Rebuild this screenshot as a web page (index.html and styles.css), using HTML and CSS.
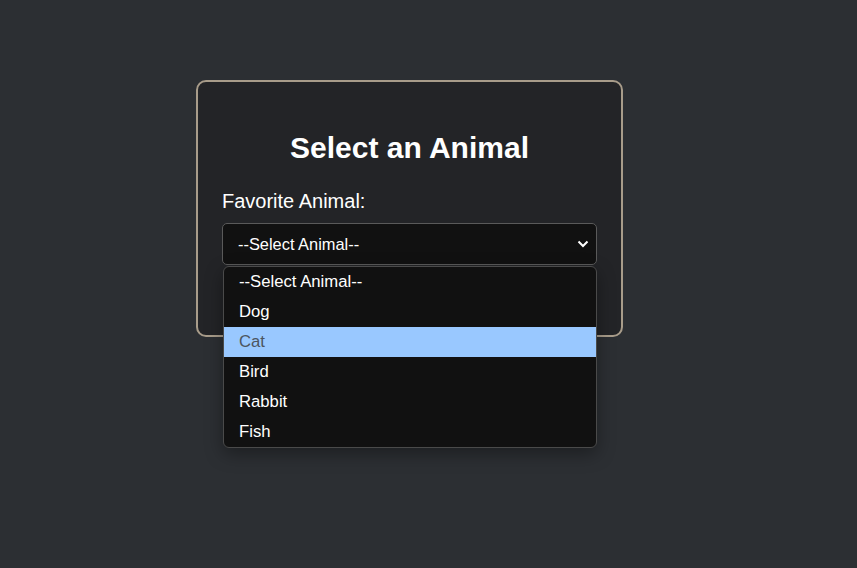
FILE: index.html
```html
<!DOCTYPE html>
<html lang="en">
<head>
<meta charset="utf-8">
<title>Select an Animal</title>
<link rel="stylesheet" href="styles.css">
</head>
<body>
<div class="stage">
  <div class="card">
    <h2 class="title">Select an Animal</h2>
    <label class="label" for="animal">Favorite Animal:</label>
    <div class="select" id="animal">
      <span>--Select Animal--</span>
      <svg class="chev" width="12" height="8" viewBox="0 0 12 8"><path d="M1.5 1.5 L6 6 L10.5 1.5" fill="none" stroke="#fff" stroke-width="2"/></svg>
    </div>
  </div>
  <ul class="menu">
    <li class="opt">--Select Animal--</li>
    <li class="opt">Dog</li>
    <li class="opt active">Cat</li>
    <li class="opt">Bird</li>
    <li class="opt">Rabbit</li>
    <li class="opt">Fish</li>
  </ul>
</div>
</body>
</html>
```
FILE: styles.css
```css
html, body {
  margin: 0;
  padding: 0;
  background: #2c2f33;
  font-family: "Liberation Sans", Arial, sans-serif;
  color: #fff;
}
body {
  padding-top: 80px;
  min-height: 488px;
}
.stage {
  position: relative;
  width: 427px;
  margin-left: 196px;
}
.card {
  width: 375px;
  padding: 24px 24px 70px 24px;
  background: #232427;
  border: 2px solid #a89c8a;
  border-radius: 10px;
}
.title {
  margin: 25px 0 25px;
  font-size: 30px;
  font-weight: bold;
  text-align: center;
  line-height: 34px;
}
.label {
  display: block;
  font-size: 20px;
  line-height: 23px;
  margin-bottom: 10px;
}
.select {
  box-sizing: border-box;
  height: 42px;
  border: 1px solid #5a5a5a;
  border-radius: 5px;
  background: #111;
  display: flex;
  align-items: center;
  justify-content: space-between;
  padding: 0 7px 0 15px;
  font-size: 16.4px;
}
.menu {
  position: absolute;
  z-index: 10;
  top: 186px;
  left: 27px;
  width: 372px;
  margin: 0;
  padding: 0;
  list-style: none;
  background: #111;
  border: 1px solid #4a4a4a;
  border-radius: 6px;
  overflow: hidden;
  box-shadow: 0 6px 18px rgba(0,0,0,0.35);
}
.opt {
  height: 30px;
  line-height: 30px;
  padding-left: 15px;
  font-size: 16.7px;
  color: #fff;
}
.opt.active {
  background: #99c8ff;
  color: #4c5560;
}
```
